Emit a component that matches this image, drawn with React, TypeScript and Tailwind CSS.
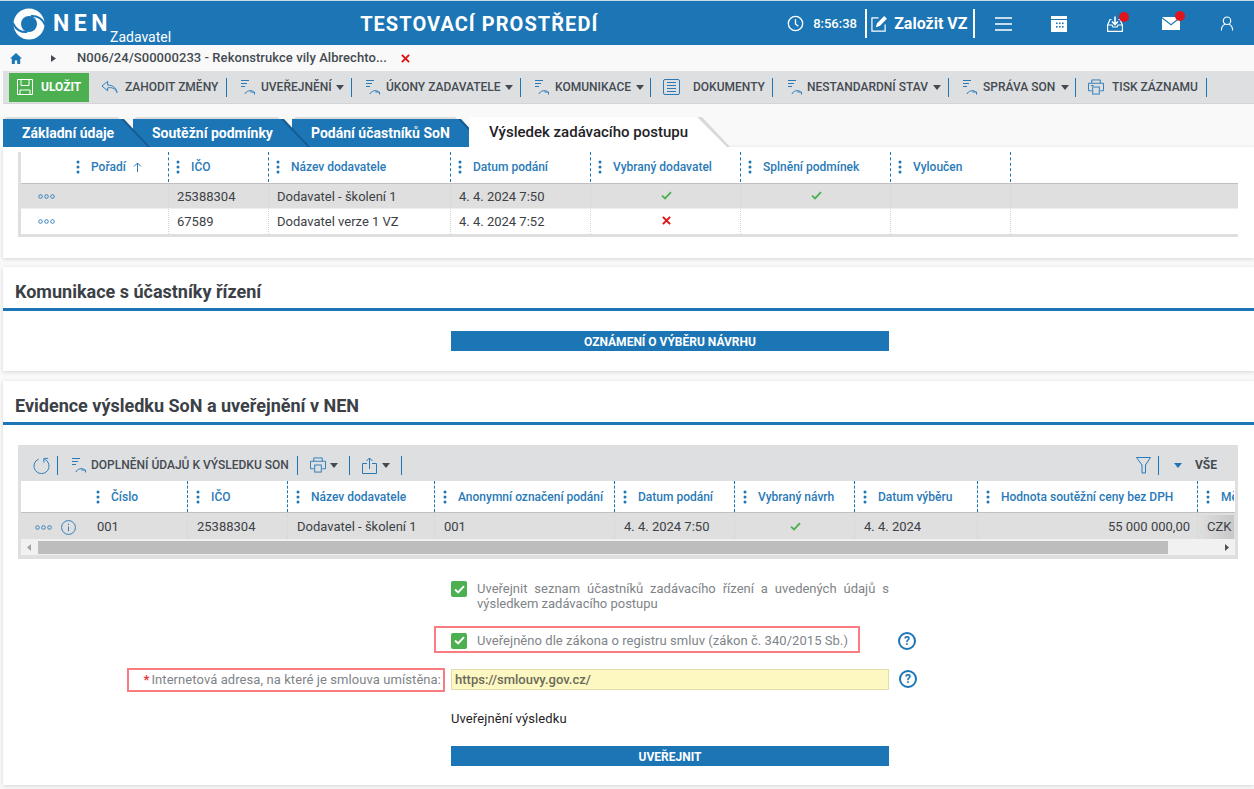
import React from "react";

const Act = ({ className = "" }: { className?: string }) => (
  <svg viewBox="0 0 16 16" className={"w-[16px] h-[16px] shrink-0 " + className} fill="none" stroke="#2a7ab8" strokeWidth="1">
    <path d="M1 1.5h8M1 4.5h6M1 7.5h4" />
    <path d="M5 15c1-3 6-4.5 8.5-2.2" />
    <path d="M10.5 13h4v2.5" />
  </svg>
);
const Caret = ({ c = "#444b52" }: { c?: string }) => (
  <svg viewBox="0 0 8 5" className="w-[8px] h-[5px] shrink-0"><path d="M0 0h8L4 5z" fill={c} /></svg>
);
const Sep = ({ className = "" }: { className?: string }) => <span className={"block w-px h-[19px] bg-[#1c75b5] shrink-0 " + className} />;
const Lbl = ({ children, w }: { children: React.ReactNode; w: string }) => (
  <span className={"text-[12px] font-medium text-[#444b52] whitespace-nowrap shrink-0 " + w}>{children}</span>
);
const Dots = () => (
  <svg viewBox="0 0 4 14" className="w-[4px] h-[14px] shrink-0"><g fill="#1c75b5"><circle cx="2" cy="2" r="1.5" /><circle cx="2" cy="7" r="1.5" /><circle cx="2" cy="12" r="1.5" /></g></svg>
);
const Rings = () => (
  <svg viewBox="0 0 17 5" className="w-[17px] h-[5px] shrink-0" fill="none" stroke="#2a7ab8" strokeWidth="0.9"><circle cx="2.5" cy="2.5" r="1.8" /><circle cx="8.5" cy="2.5" r="1.8" /><circle cx="14.5" cy="2.5" r="1.8" /></svg>
);
const Tick = () => (
  <svg viewBox="0 0 12 10" className="w-[11px] h-[9px] mb-[2px]"><path d="M1 5.2l3.4 3L11 1.2" fill="none" stroke="#4caf50" strokeWidth="2" /></svg>
);
const Cross = ({ className = "" }: { className?: string }) => (
  <svg viewBox="0 0 10 10" className={"w-[9px] h-[9px] " + className}><path d="M1 1l8 8M9 1L1 9" fill="none" stroke="#e01414" strokeWidth="2.2" /></svg>
);
const Check = () => (
  <span className="w-[16px] h-[16px] rounded-[2px] bg-[#4caf50] flex items-center justify-center shrink-0">
    <svg viewBox="0 0 12 10" className="w-[11px] h-[9px]"><path d="M1 5l3.5 3.2L11 1.2" fill="none" stroke="#fff" strokeWidth="2.2" /></svg>
  </span>
);
const Help = () => (
  <span className="w-[18px] h-[18px] rounded-full border-2 border-[#1c75b5] text-[#1c75b5] text-[12px] font-bold flex items-center justify-center shrink-0 leading-none">?</span>
);

const HCell = ({ w, label, sep = true, extra, pl = "pl-[7px]" }: { w: string; label?: string; sep?: boolean; extra?: React.ReactNode; pl?: string }) => (
  <div className={"h-full flex items-center shrink-0 " + pl + " " + w + (sep ? " border-r border-dashed border-[#1c75b5]" : "")}>
    {label && (
      <>
        <Dots />
        <span className="ml-[11px] text-[12px] font-medium text-[#2a7ab8] whitespace-nowrap">{label}</span>
        {extra}
      </>
    )}
  </div>
);
const Cell = ({ w, children, center, right, pl = "pl-[9px]" }: { w: string; children?: React.ReactNode; center?: boolean; right?: boolean; pl?: string }) => (
  <div className={"h-full flex items-center shrink-0 text-[13px] text-[#3c4146] whitespace-nowrap border-r border-dotted border-[#d2d4d6] " + w + (center ? " justify-center pl-[2px]" : right ? " justify-end pr-[7px]" : " " + pl)}>
    {children}
  </div>
);

const Tab = ({ label, w, cls }: { label: string; w: string; cls: string }) => (
  <div className={"relative h-[30px] shrink-0 " + w + " " + cls}>
    <div className="absolute inset-0 bg-[#dcdcdc] [clip-path:polygon(4px_0,calc(100%-32px)_0,calc(100%-19px)_14px,0_2px)]" />
    <div className="absolute inset-0 bg-gradient-to-r from-[#1c75b5] to-[#14588c] [clip-path:polygon(calc(100%-30px)_2px,calc(100%-26px)_2px,100%_100%,calc(100%-6px)_100%)]" />
    <div className="absolute inset-0 pt-[3px] pl-[19px] bg-[#1c75b5] [clip-path:polygon(0_2px,calc(100%-29px)_2px,calc(100%-2px)_100%,0_100%)] text-white text-[14px] leading-[27px] font-bold whitespace-nowrap">{label}</div>
  </div>
);

const Heading = ({ children }: { children: React.ReactNode }) => (
  <div className="h-[44px] border-b-[3px] border-[#1c75b5] pl-[12px] flex items-center pt-[9px] text-[18px] leading-none font-bold text-[#3b4046]">{children}</div>
);

export default function App() {
  return (
    <div className="w-[1254px] h-[789px] overflow-hidden bg-[#f9f9f9] font-['Roboto',sans-serif]">
      {/* header */}
      <div className="h-[45px] mt-px pt-px bg-[#1c75b5] flex items-center text-white relative -top-px border-t border-[#c8dbe9]">
        <svg viewBox="0 0 34 34" className="w-[32px] h-[32px] ml-[13px] shrink-0">
          <circle cx="17" cy="17" r="16.5" fill="#fff" />
          <circle cx="17" cy="17" r="8.5" fill="#1c75b5" />
          <path d="M19 8.5C26 8 31.5 12 34 18" fill="none" stroke="#1c75b5" strokeWidth="2.2" />
          <path d="M15 25.5C8 26 2.5 22 0 16" fill="none" stroke="#1c75b5" strokeWidth="2.2" />
        </svg>
        <span className="ml-[8px] w-[57px] text-[23px] leading-none font-bold tracking-[4.5px]">NEN</span>
        <span className="self-end -mb-[1px] text-[14px] leading-[18px]">Zadavatel</span>
        <span className="ml-[189px] text-[20px] font-bold tracking-[1.05px] whitespace-nowrap w-[427px]">TESTOVACÍ PROSTŘEDÍ</span>
        <svg viewBox="0 0 18 18" className="w-[17px] h-[17px] shrink-0" fill="none" stroke="#fff" strokeWidth="1.4"><circle cx="9" cy="9" r="7.6" /><path d="M9 4.5V9.5l3 2.5" /></svg>
        <span className="ml-[9px] text-[13px] font-medium w-[43px]">8:56:38</span>
        <span className="ml-[9px] block w-[2px] h-[29px] bg-white shrink-0" />
        <svg viewBox="0 0 17 17" className="ml-[4px] w-[16px] h-[16px] shrink-0" fill="none" stroke="#fff" strokeWidth="1.3"><path d="M8 2H1v14h14V9" /><path d="M6 11l1-3 7-7 2 2-7 7z" fill="#fff" /></svg>
        <span className="ml-[7px] text-[16px] font-bold w-[75px] whitespace-nowrap">Založit VZ</span>
        <span className="ml-[4px] block w-[2px] h-[29px] bg-white shrink-0" />
        <svg viewBox="0 0 17 14" className="ml-[20px] w-[17px] h-[14px] shrink-0" stroke="#fff" strokeWidth="1.4"><path d="M0 1h17M0 7h17M0 13h17" /></svg>
        <svg viewBox="0 0 16 16" className="ml-[39px] w-[16px] h-[16px] shrink-0"><path d="M0 0h16v16H0z" fill="#fff" /><path d="M0 3.5h16" stroke="#1c75b5" /><g fill="#1c75b5"><rect x="5" y="6.5" width="1.6" height="1.6" /><rect x="8" y="6.5" width="1.6" height="1.6" /><rect x="11" y="6.5" width="1.6" height="1.6" /><rect x="5" y="10" width="1.6" height="1.6" /><rect x="8" y="10" width="1.6" height="1.6" /><rect x="11" y="10" width="1.6" height="1.6" /></g></svg>
        <div className="relative ml-[40px] shrink-0">
          <svg viewBox="0 0 16 16" className="w-[16px] h-[16px] block" fill="none" stroke="#fff" strokeWidth="1.2"><path d="M4.5 3.5H3L.6 9v6.4h14.8V9L13 3.5h-1.5M.6 9H5l1 2h4l1-2h4.4" /><path d="M8 .5V8M5 5.5L8 8.5l3-3" strokeWidth="1.6" /></svg>
          <span className="absolute -top-[4px] -right-[6px] w-[10px] h-[10px] rounded-full bg-[#e0141c]" />
        </div>
        <div className="relative ml-[39px] shrink-0">
          <svg viewBox="0 0 18 13" className="w-[18px] h-[13px] block"><path d="M0 0h18L9 7z M0 1.5l9 7 9-7V13H0z" fill="#fff" /></svg>
          <span className="absolute -top-[6px] -right-[5px] w-[10px] h-[10px] rounded-full bg-[#e0141c]" />
        </div>
        <svg viewBox="0 0 14 16" className="ml-[40px] w-[14px] h-[15px] shrink-0" fill="none" stroke="#fff" strokeWidth="1.2"><circle cx="7" cy="5" r="4" /><path d="M1 15.5c0-4 2-6 4-6.7M13 15.5c0-4-2-6-4-6.7" /></svg>
      </div>

      {/* breadcrumb */}
      <div className="h-[26px] flex items-center -mt-px">
        <svg viewBox="0 0 12 11" className="ml-[10px] w-[12px] h-[11px] shrink-0"><path d="M6 0L0 5.5h1.8V11h3V7.5h2.4V11h3V5.5H12z" fill="#1c75b5" /></svg>
        <svg viewBox="0 0 5 7" className="ml-[29px] w-[5px] h-[7px] shrink-0"><path d="M0 0l5 3.5L0 7z" fill="#444b52" /></svg>
        <span className="ml-[21px] text-[13px] font-medium text-[#444b52] whitespace-nowrap w-[321px] tracking-[0.06px]">N006/24/S00000233 - Rekonstrukce vily Albrechto...</span>
        <span className="ml-[3px] flex"><Cross /></span>
      </div>

      {/* toolbar */}
      <div className="ml-[3px] h-[33px] bg-[#dedfe1] flex items-center border-b border-[#d4d5d7]">
        <div className="ml-[6px] w-[80px] h-[29px] bg-[#4caf50] flex items-center text-white text-[12px] font-bold shrink-0">
          <svg viewBox="0 0 16 16" className="ml-[8px] w-[16px] h-[16px]" fill="none" stroke="#fff" strokeWidth="1"><path d="M.5.5h15v15H.5z" /><path d="M4 .5v6h8v-6M3 15.5V11h10v4.5" /></svg>
          <span className="ml-[8px]">ULOŽIT</span>
        </div>
        <svg viewBox="0 0 18 14" className="ml-[12px] w-[17px] h-[14px] shrink-0" fill="none" stroke="#2a7ab8" strokeWidth="1"><path d="M7 1L1 6l6 5V8c4-1 8 0 10 5-1-6-5-8-10-8z" /></svg>
        <span className="ml-[7px]"><Lbl w="block w-[94px]">ZAHODIT ZMĚNY</Lbl></span>
        <Sep className="ml-[7px]" />
        <Act className="ml-[13px]" />
        <span className="ml-[5px]"><Lbl w="block w-[71px]">UVEŘEJNĚNÍ</Lbl></span>
        <span className="ml-[4px]"><Caret /></span>
        <Sep className="ml-[7px]" />
        <Act className="ml-[13px]" />
        <span className="ml-[5px]"><Lbl w="block w-[115px]">ÚKONY ZADAVATELE</Lbl></span>
        <span className="ml-[4px]"><Caret /></span>
        <Sep className="ml-[7px]" />
        <Act className="ml-[13px]" />
        <span className="ml-[5px]"><Lbl w="block w-[77px]">KOMUNIKACE</Lbl></span>
        <span className="ml-[4px]"><Caret /></span>
        <Sep className="ml-[6px]" />
        <svg viewBox="0 0 17 16" className="ml-[12px] w-[17px] h-[16px] shrink-0" fill="none" stroke="#2a7ab8" strokeWidth="1"><rect x=".5" y=".5" width="16" height="15" rx="1.5" /><path d="M4 3.5h9M4 6.5h9M4 9.5h9M4 12.5h9" /></svg>
        <span className="ml-[13px]"><Lbl w="block w-[73px]">DOKUMENTY</Lbl></span>
        <Sep className="ml-[6px]" />
        <Act className="ml-[14px]" />
        <span className="ml-[4px]"><Lbl w="block w-[122px]">NESTANDARDNÍ STAV</Lbl></span>
        <span className="ml-[4px]"><Caret /></span>
        <Sep className="ml-[7px]" />
        <Act className="ml-[13px]" />
        <span className="ml-[5px]"><Lbl w="block w-[73px]">SPRÁVA SON</Lbl></span>
        <span className="ml-[5px]"><Caret /></span>
        <Sep className="ml-[6px]" />
        <svg viewBox="0 0 17 16" className="ml-[12px] w-[16px] h-[16px] shrink-0" fill="none" stroke="#2a7ab8" strokeWidth="1"><path d="M4 4V.5h9V4M4 12H.5V4h16v8H13" /><rect x="5" y="8" width="7" height="7.5" /><path d="M3 6.5h3" /></svg>
        <span className="ml-[8px]"><Lbl w="block w-[87px]">TISK ZÁZNAMU</Lbl></span>
        <Sep className="ml-[7px]" />
      </div>

      {/* tabs */}
      <div className="mt-[13px] ml-[3px] h-[30px] flex items-end">
        <Tab label="Základní údaje" w="w-[147px] -mr-[17px]" cls="z-30" />
        <Tab label="Soutěžní podmínky" w="w-[177px] -mr-[18px]" cls="z-20" />
        <Tab label="Podání účastníků SoN" w="w-[195px] -mr-[18px]" cls="z-10" />
        <div className="relative z-40 h-[30px] w-[261px] shrink-0">
          <div className="absolute inset-0 bg-gradient-to-r from-[#f9f9f9] to-[#d6d6d6] [clip-path:polygon(calc(100%-36px)_0,calc(100%-28px)_0,100%_100%,calc(100%-6px)_100%)]" />
          <div className="absolute inset-0 bg-white [clip-path:polygon(0_0,calc(100%-33px)_0,calc(100%-3px)_100%,0_100%)] pl-[20px] pt-[6px] text-[15px] leading-[18px] font-medium text-[#1f2226]">Výsledek zadávacího postupu</div>
        </div>
      </div>

      {/* card 1 */}
      <div className="ml-[3px] h-[111px] bg-white shadow-[0_1px_4px_rgba(0,0,0,0.15)] pt-[5px] pl-[15px] pr-[16px]">
        <div className="w-[1220px] h-[85px] bg-[#dedfe1] pl-[3px] pb-[3px]">
          <div className="h-[32px] pb-px bg-white flex border-b border-[#bfc0c2]">
            <HCell w="w-[148px]" label="Pořadí" pl="pl-[55px]" extra={<svg viewBox="0 0 9 10" className="ml-[7px] w-[9px] h-[10px]" fill="none" stroke="#2a7ab8"><path d="M4.5 10V1M1 4.5L4.5 1 8 4.5" /></svg>} />
            <HCell w="w-[100px]" label="IČO" />
            <HCell w="w-[182px]" label="Název dodavatele" />
            <HCell w="w-[140px]" label="Datum podání" />
            <HCell w="w-[150px]" label="Vybraný dodavatel" />
            <HCell w="w-[150px]" label="Splnění podmínek" />
            <HCell w="w-[120px]" label="Vyloučen" />
            <div className="flex-1" />
          </div>
          <div className="h-[25px] pt-px bg-[#dfdfdf] flex border-b border-[#eee]">
            <Cell w="w-[148px]" pl="pl-[8px]"><span className="ml-[9px] flex"><Rings /></span></Cell>
            <Cell w="w-[100px]" pl="pl-[8px]">25388304</Cell>
            <Cell w="w-[182px]" pl="pl-[8px]">Dodavatel - školení 1</Cell>
            <Cell w="w-[140px]" pl="pl-[8px]">4. 4. 2024 7:50</Cell>
            <Cell w="w-[150px]" center><Tick /></Cell>
            <Cell w="w-[150px]" center><Tick /></Cell>
            <Cell w="w-[120px]" />
          </div>
          <div className="h-[25px] bg-white flex">
            <Cell w="w-[148px]" pl="pl-[8px]"><span className="ml-[9px] flex"><Rings /></span></Cell>
            <Cell w="w-[100px]" pl="pl-[8px]">67589</Cell>
            <Cell w="w-[182px]" pl="pl-[8px]">Dodavatel verze 1 VZ</Cell>
            <Cell w="w-[140px]" pl="pl-[8px]">4. 4. 2024 7:52</Cell>
            <Cell w="w-[150px]" center><Cross className="mb-[3px]" /></Cell>
            <Cell w="w-[150px]" />
            <Cell w="w-[120px]" />
          </div>
        </div>
      </div>

      {/* card 2 */}
      <div className="mt-[9px] ml-[3px] h-[104px] bg-white shadow-[0_1px_4px_rgba(0,0,0,0.15)]">
        <Heading>Komunikace s účastníky řízení</Heading>
        <div className="mt-[20px] ml-[448px] w-[438px] h-[20px] pt-px bg-[#1c75b5] text-white text-[12px] font-bold flex items-center justify-center">OZNÁMENÍ O VÝBĚRU NÁVRHU</div>
      </div>

      {/* card 3 */}
      <div className="mt-[10px] ml-[3px] h-[404px] bg-white shadow-[0_1px_4px_rgba(0,0,0,0.15)]">
        <Heading>Evidence výsledku SoN a uveřejnění v NEN</Heading>
        <div className="mt-[20px] ml-[15px] w-[1220px] h-[114px] bg-[#dedfe1] px-[3px] overflow-hidden">
          <div className="h-[36px] pt-[4px] flex items-center">
            <svg viewBox="0 0 18 18" className="ml-[12px] w-[17px] h-[17px] shrink-0" fill="none" stroke="#2a7ab8" strokeWidth="1"><path d="M6 2.2a8 8 0 1 0 6 0M11.5 6V1.5h4.5" /></svg>
            <Sep className="ml-[7px]" />
            <Act className="ml-[13px]" />
            <span className="ml-[4px] text-[12px] font-medium text-[#444b52] whitespace-nowrap w-[198px]">DOPLNĚNÍ ÚDAJŮ K VÝSLEDKU SON</span>
            <Sep className="ml-[8px]" />
            <svg viewBox="0 0 17 16" className="ml-[12px] w-[16px] h-[16px] shrink-0" fill="none" stroke="#2a7ab8" strokeWidth="1"><path d="M4 4V.5h9V4M4 12H.5V4h16v8H13" /><rect x="5" y="8" width="7" height="7.5" /></svg>
            <span className="ml-[4px]"><Caret /></span>
            <Sep className="ml-[11px]" />
            <svg viewBox="0 0 15 17" className="ml-[12px] w-[15px] h-[17px] shrink-0" fill="none" stroke="#2a7ab8" strokeWidth="1"><path d="M7.5 12V1M4.5 4l3-3 3 3M5 6.5H.5v10h14v-10H10" /></svg>
            <span className="ml-[5px]"><Caret /></span>
            <Sep className="ml-[11px]" />
            <svg viewBox="0 0 15 17" className="ml-auto w-[15px] h-[17px] shrink-0" fill="none" stroke="#2a7ab8" strokeWidth="1"><path d="M.5.5h14L9.5 8v8H6V8z" /></svg>
            <Sep className="ml-[7px]" />
            <span className="ml-[15px]"><Caret c="#1c75b5" /></span>
            <span className="ml-[13px] mr-[18px] text-[12px] font-bold text-[#444b52]">VŠE</span>
          </div>
          <div className="h-[32px] bg-white flex border-b border-[#bfc0c2] overflow-hidden">
            <HCell w="w-[167px]" label="Číslo" pl="pl-[75px]" />
            <HCell w="w-[100px]" label="IČO" pl="pl-[8px]" />
            <HCell w="w-[147px]" label="Název dodavatele" pl="pl-[8px]" />
            <HCell w="w-[180px]" label="Anonymní označení podání" pl="pl-[8px]" />
            <HCell w="w-[120px]" label="Datum podání" pl="pl-[8px]" />
            <HCell w="w-[120px]" label="Vybraný návrh" pl="pl-[8px]" />
            <HCell w="w-[123px]" label="Datum výběru" pl="pl-[8px]" />
            <HCell w="w-[220px]" label="Hodnota soutěžní ceny bez DPH" pl="pl-[8px]" />
            <HCell w="w-[36px] overflow-hidden" label="Měna" sep={false} pl="pl-[8px]" />
          </div>
          <div className="h-[26px] pt-[2px] bg-[#dfdfdf] flex overflow-hidden">
            <Cell w="w-[167px]">
              <span className="ml-[5px] flex"><Rings /></span>
              <svg viewBox="0 0 16 16" className="ml-[9px] w-[15px] h-[15px] shrink-0" fill="none" stroke="#2a7ab8"><circle cx="8" cy="8" r="7.4" /><path d="M8 7v5M8 4v1.5" /></svg>
              <span className="ml-[21px]">001</span>
            </Cell>
            <Cell w="w-[100px]">25388304</Cell>
            <Cell w="w-[147px]">Dodavatel - školení 1</Cell>
            <Cell w="w-[180px]">001</Cell>
            <Cell w="w-[120px]">4. 4. 2024 7:50</Cell>
            <Cell w="w-[120px]" center><Tick /></Cell>
            <Cell w="w-[123px]">4. 4. 2024</Cell>
            <Cell w="w-[220px]" right>55 000 000,00</Cell>
            <div className="w-[36px] h-full flex items-center pl-[9px] text-[13px] text-[#3c4146] overflow-hidden bg-gradient-to-r from-[#dfdfdf] to-[#c8c8c8]">CZK</div>
          </div>
          <div className="h-[16px] bg-[#f1f1f1] flex items-center">
            <svg viewBox="0 0 4 7" className="ml-[6px] w-[4px] h-[7px] shrink-0"><path d="M4 0L0 3.5 4 7z" fill="#a3a3a3" /></svg>
            <div className="ml-[7px] h-[13px] w-[1130px] bg-[#bdbdbd]" />
            <svg viewBox="0 0 4 7" className="ml-auto mr-[6px] w-[4px] h-[7px] shrink-0"><path d="M0 0l4 3.5L0 7z" fill="#505050" /></svg>
          </div>
        </div>

        {/* form */}
        <div className="mt-[22px] ml-[448px] w-[438px] flex items-start">
          <Check />
          <p className="ml-[10px] text-[13px] leading-[15px] text-[#808488] text-justify">Uveřejnit seznam účastníků zadávacího řízení a uvedených údajů s výsledkem zadávacího postupu</p>
        </div>
        <div className="mt-[15px] flex items-center h-[27px]">
          <div className="ml-[431px] w-[426px] h-[27px] pt-[2px] border-2 border-[#fb7c80] flex items-center pl-[15px] shrink-0">
            <Check />
            <span className="ml-[10px] text-[13px] text-[#808488] whitespace-nowrap tracking-[0.05px]">Uveřejněno dle zákona o registru smluv (zákon č. 340/2015 Sb.)</span>
          </div>
          <span className="ml-[38px] mt-[2px]"><Help /></span>
        </div>
        <div className="mt-[15px] flex items-center h-[24px]">
          <div className="ml-[124px] w-[318px] h-[24px] border-2 border-[#fb7c80] flex items-center justify-end pr-[2px] text-[13px] text-[#808488] whitespace-nowrap shrink-0 tracking-[0.08px]">
            <span className="text-[#e53935] font-bold mr-[2px]">*</span>Internetová adresa, na které je smlouva umístěna:
          </div>
          <div className="ml-[6px] mb-px w-[438px] h-[21px] bg-[#fdf7c2] border border-[#e2dda8] flex items-center pl-[3px] text-[13px] font-medium text-[#6a6a5a] shrink-0">https://smlouvy.gov.cz/</div>
          <span className="ml-[10px] mb-[3px]"><Help /></span>
        </div>
        <div className="mt-[19px] ml-[448px] text-[13px] leading-[15px] text-[#1f2226] tracking-[0.1px]">Uveřejnění výsledku</div>
        <div className="mt-[20px] ml-[448px] w-[438px] h-[20px] pt-px bg-[#1c75b5] text-white text-[12px] font-bold flex items-center justify-center">UVEŘEJNIT</div>
      </div>
    </div>
  );
}
